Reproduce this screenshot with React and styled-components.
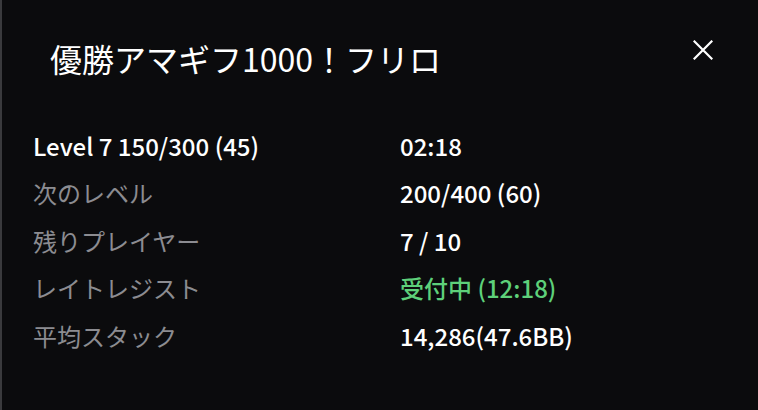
import React from 'react'
import styled, { createGlobalStyle } from 'styled-components'

const GlobalStyle = createGlobalStyle`
  html, body {
    margin: 0;
    padding: 0;
    background: #0b0b0d;
  }
  * { box-sizing: border-box; }
`

const Panel = styled.div`
  width: 758px;
  height: 410px;
  background: #0b0b0d;
  border-left: 2px solid #3a3a3d;
  font-family: "Noto Sans CJK JP", "Noto Sans", sans-serif;
  color: #ffffff;
  display: flex;
  flex-direction: column;
`

const Header = styled.div`
  display: flex;
  align-items: center;
  justify-content: space-between;
  padding: 36px 44px 0 48px;
  height: 80px;
`

const Title = styled.h1`
  margin: 0;
  font-size: 32px;
  line-height: 44px;
  font-weight: 400;
`

const CloseButton = styled.button`
  background: none;
  border: none;
  padding: 0;
  width: 22px;
  height: 22px;
  display: flex;
  align-items: center;
  justify-content: center;
  cursor: pointer;
  margin-top: -16px;
`

const Info = styled.div`
  display: grid;
  grid-template-columns: 367px 1fr;
  grid-auto-rows: 47.5px;
  align-items: center;
  padding: 42px 0 0 31px;
`

const Label = styled.div`
  font-size: 24px;
  line-height: 32px;
  font-weight: ${p => (p.$strong ? 500 : 400)};
  color: ${p => (p.$strong ? '#ffffff' : '#8c8c91')};
`

const Value = styled.div`
  font-size: 24px;
  line-height: 32px;
  font-weight: 500;
  color: ${p => (p.$green ? '#5ed07a' : '#ffffff')};
`

const rows = [
  { label: 'Level 7 150/300 (45)', value: '02:18', strong: true },
  { label: '次のレベル', value: '200/400 (60)' },
  { label: '残りプレイヤー', value: '7 / 10' },
  { label: 'レイトレジスト', value: '受付中 (12:18)', green: true },
  { label: '平均スタック', value: '14,286(47.6BB)' },
]

export default function App() {
  return (
    <>
      <GlobalStyle />
      <Panel>
        <Header>
          <Title>優勝アマギフ1000！フリロ</Title>
          <CloseButton aria-label="close">
            <svg width="20" height="20" viewBox="0 0 20 20">
              <path d="M1.5 1.5 L18.5 18.5 M18.5 1.5 L1.5 18.5" stroke="#ffffff" strokeWidth="2.2" strokeLinecap="square" />
            </svg>
          </CloseButton>
        </Header>
        <Info>
          {rows.map((row) => (
            <React.Fragment key={row.label}>
              <Label $strong={row.strong}>{row.label}</Label>
              <Value $green={row.green}>{row.value}</Value>
            </React.Fragment>
          ))}
        </Info>
      </Panel>
    </>
  )
}
